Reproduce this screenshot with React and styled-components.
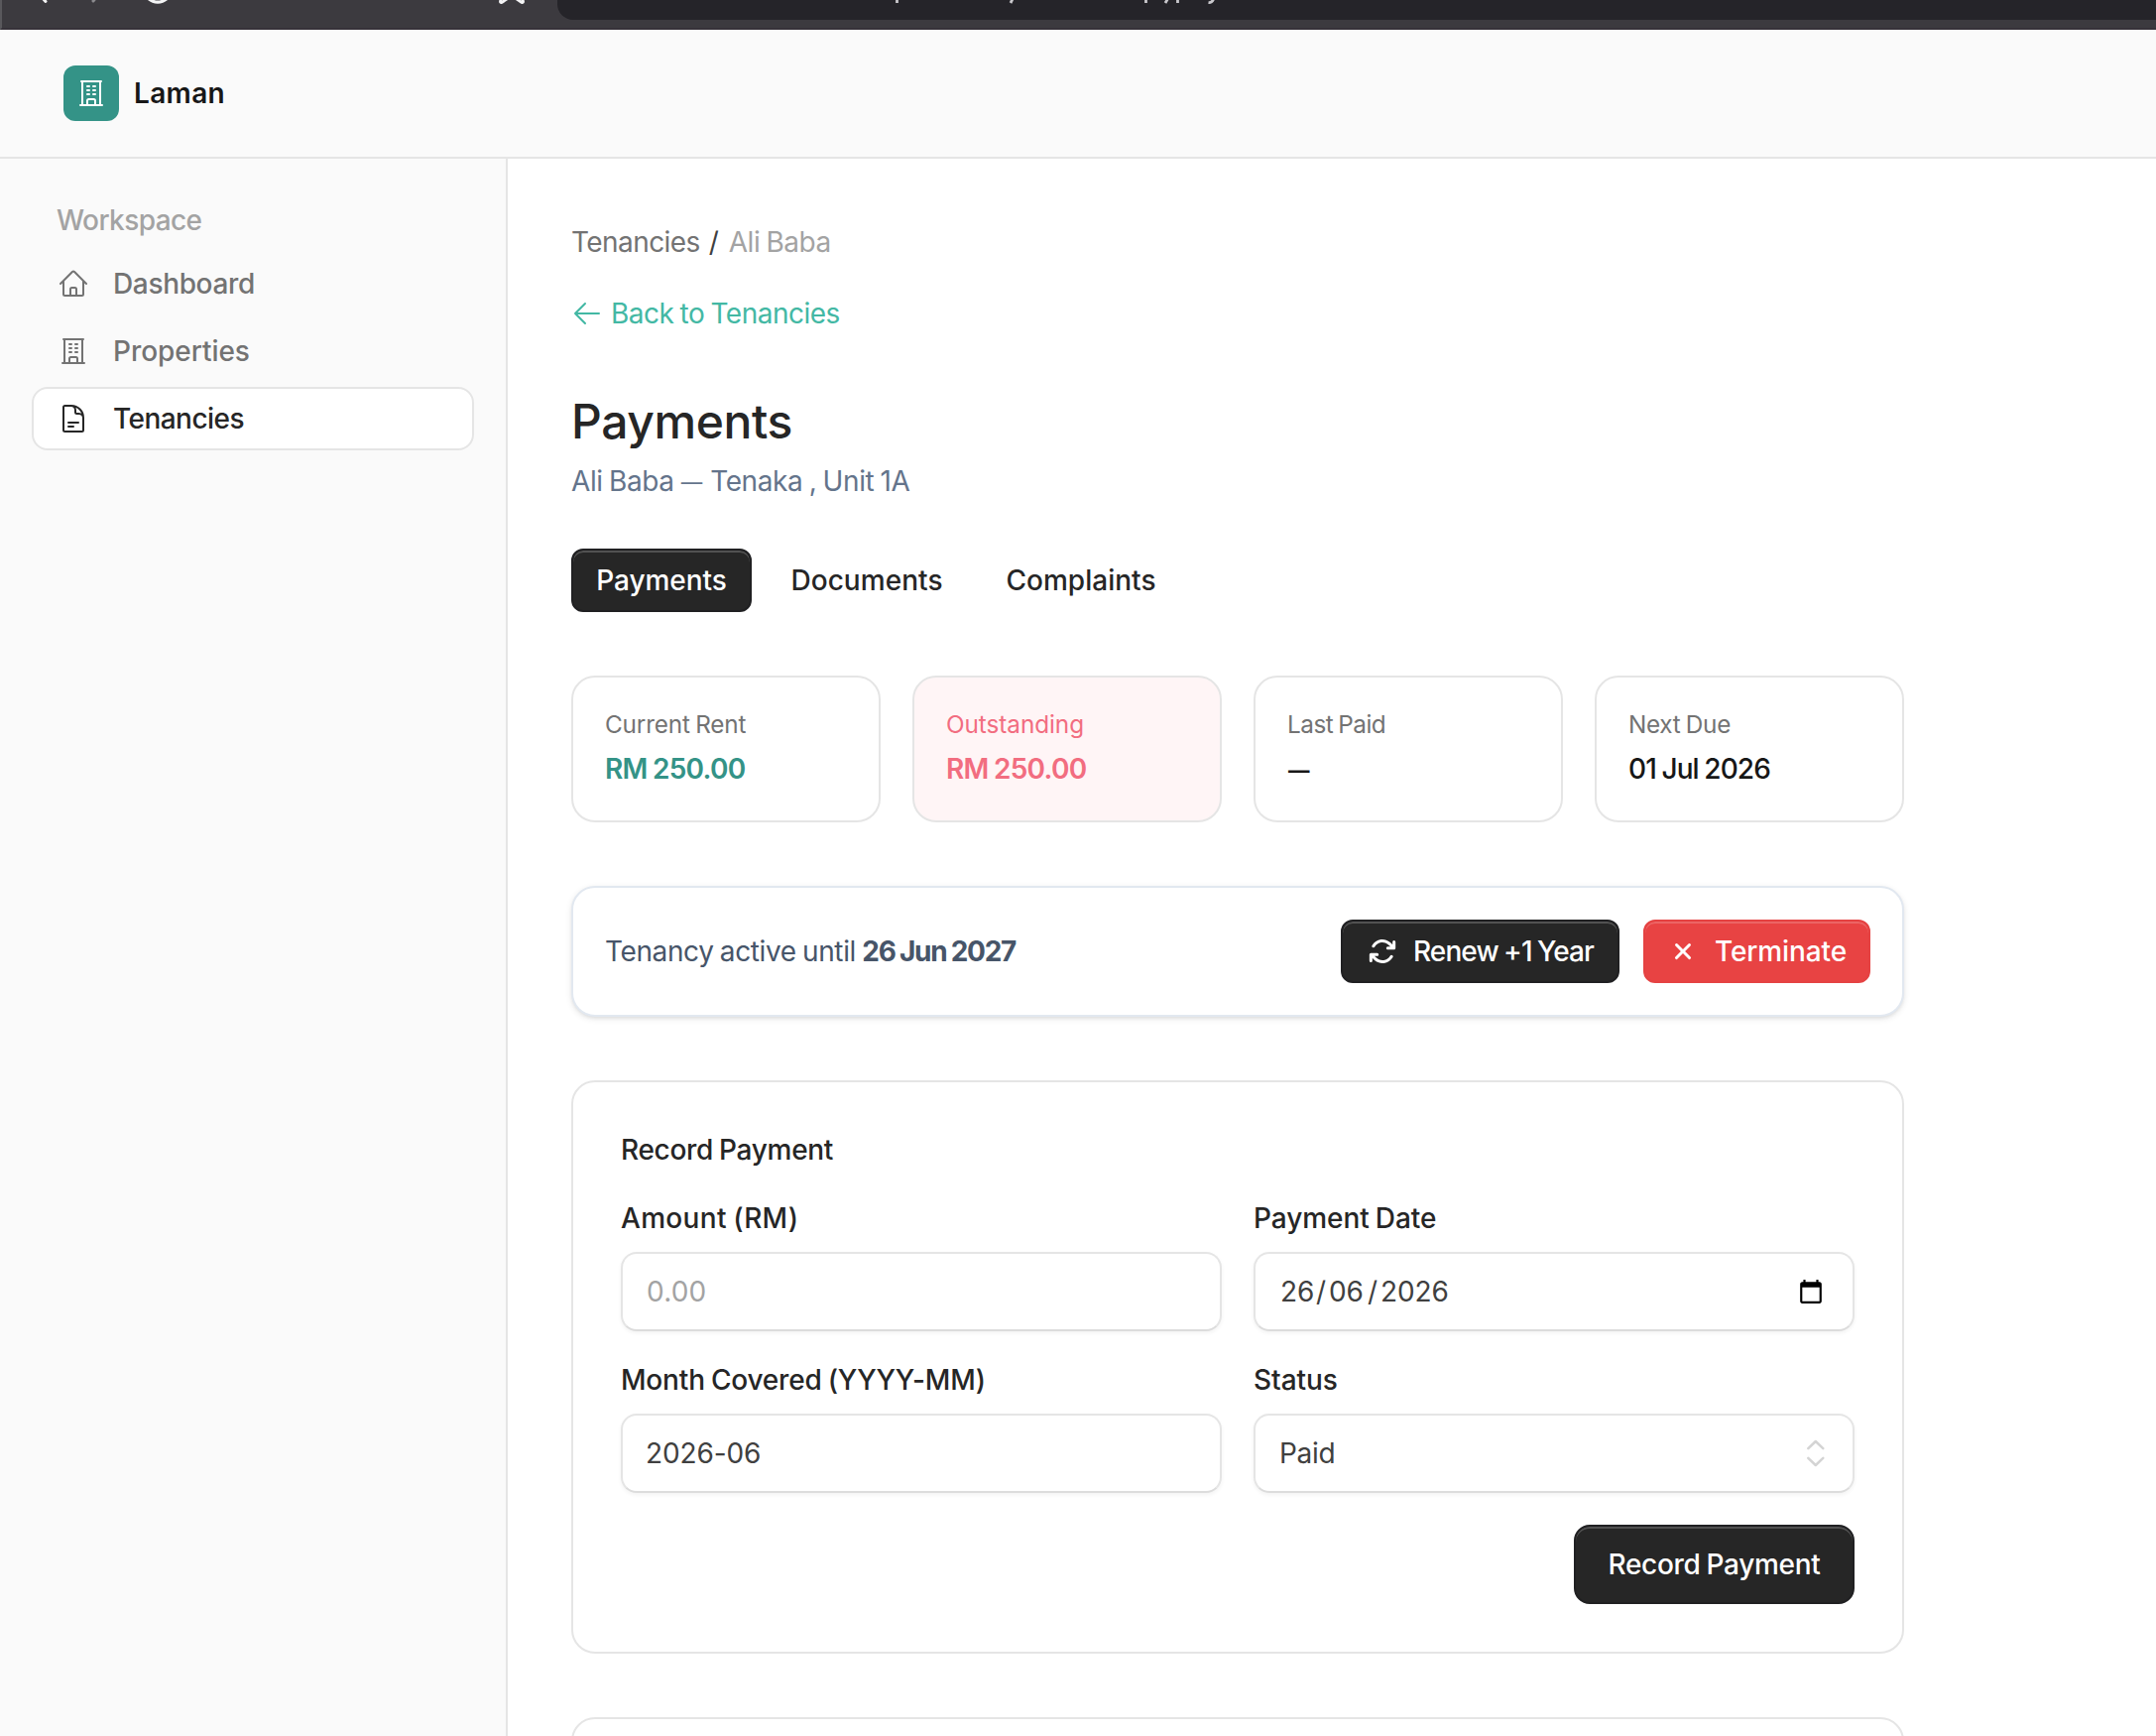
import React from "react";
import styled, { createGlobalStyle, css } from "styled-components";
import {
  HiOutlineHome,
  HiOutlineBuildingOffice,
  HiOutlineDocumentText,
  HiOutlineArrowLeft,
} from "react-icons/hi2";

const GlobalStyle = createGlobalStyle`
  *, *::before, *::after { box-sizing: border-box; }
  html, body { margin: 0; padding: 0; overflow: hidden; background: #fff; }
  body {
    font-family: Inter, "Liberation Sans", sans-serif;
    font-size: 28px;
    line-height: 40px;
    color: #262626;
    -webkit-font-smoothing: antialiased;
  }
`;

/* Per-string tracking: letter spacing and word spacing in px. */
const tracking = css`
  letter-spacing: ${(p) => p.$ls ?? -0.3}px;
  word-spacing: ${(p) => p.$ws ?? -1.2}px;
  white-space: nowrap;
`;

const Page = styled.div`
  display: flex;
  flex-direction: column;
  width: 2174px;
  height: 1750px;
  overflow: hidden;
`;

/* Browser toolbar */
const BrowserBar = styled.div`
  display: flex;
  flex: none;
  height: 30px;
  background: #3c3a3f;
  border-bottom: 2px solid #37323a;
  border-left: 2px solid #59585c;
`;
const BrowserButtons = styled.svg`
  display: block;
  flex: none;
  width: 560px;
  height: 28px;
`;
const AddressBar = styled.div`
  flex: 1;
  height: 20px;
  background: #252429;
  border-bottom-left-radius: 16px;
  overflow: hidden;
`;
const AddressMarks = styled.svg`
  display: block;
  width: 700px;
  height: 20px;
`;

/* Header */
const Header = styled.header`
  display: flex;
  flex: none;
  align-items: center;
  gap: 15px;
  height: 130px;
  padding: 0 64px 2px;
  background: #fafafa;
  box-shadow: inset 0 -2px #e5e5e5;
`;
const Logo = styled.div`
  display: grid;
  place-items: center;
  width: 56px;
  height: 56px;
  border-radius: 12px;
  background: #349387;
  color: #fff;
  font-size: 32px;
  svg { display: block; }
`;
const Brand = styled.span`
  ${tracking}
  font-weight: 600;
  color: #171717;
`;

const Body = styled.div`
  display: flex;
  flex: 1;
  min-height: 0;
`;

/* Sidebar */
const Sidebar = styled.aside`
  flex: none;
  width: 512px;
  padding: 42px 32px 0;
  background: #fafafa;
  border-right: 2px solid #e5e5e5;
`;
const NavHeading = styled.div`
  ${tracking}
  padding-left: 25px;
  margin-bottom: 12px;
  font-weight: 500;
  color: #a3a3a3;
`;
const NavList = styled.nav`
  display: flex;
  flex-direction: column;
  gap: 4px;
`;
const NavItem = styled.a`
  ${tracking}
  display: flex;
  align-items: center;
  gap: 24px;
  width: 446px;
  height: 64px;
  padding-left: 24px;
  border: 2px solid ${(p) => (p.$active ? "#e5e5e5" : "transparent")};
  border-radius: 16px;
  background: ${(p) => (p.$active ? "#fff" : "transparent")};
  color: ${(p) => (p.$active ? "#262626" : "#737373")};
  font-weight: 500;
  svg { width: 32px; height: 32px; flex: none; }
`;

/* Main column */
const Main = styled.main`
  flex: none;
  width: 1408px;
  padding: 64px 0 0 64px;
`;
const Breadcrumbs = styled.div`
  display: flex;
  height: 40px;
`;
const Crumb = styled.span`
  ${tracking}
  color: ${(p) => (p.$current ? "#a3a3a3" : "#737373")};
`;
const Slash = styled.span`
  width: 29px;
  padding-left: 9px;
  color: #404040;
`;
const BackLink = styled.a`
  ${tracking}
  display: flex;
  align-items: center;
  gap: 8px;
  height: 40px;
  margin-top: 32px;
  color: #43b8a4;
  svg { width: 32px; height: 32px; }
`;
const Title = styled.h1`
  ${tracking}
  margin: 61px 0 12px;
  font-size: 48px;
  line-height: 56px;
  font-weight: 500;
`;
const Subtitle = styled.p`
  ${tracking}
  height: 40px;
  margin: 0;
  color: #64748b;
`;
const Dash = styled.span`
  margin: 0 2px 0 1px;
  font-size: 21.5px;
  line-height: 0;
  vertical-align: 1px;
  ${(p) => p.$bold && "font-weight: 700;"}
`;

const Tabs = styled.div`
  display: flex;
  gap: 16px;
  margin-top: 48px;
`;
const darkFill = css`
  background: #262626;
  border-color: #202022;
  box-shadow: inset 0 2px rgba(255, 255, 255, 0.2);
  color: #fff;
`;
const redFill = css`
  background: #e84343;
  border-color: #e54242;
  box-shadow: inset 0 2px rgba(255, 255, 255, 0.18);
  color: #fff;
`;
const Button = styled.button`
  display: flex;
  align-items: center;
  justify-content: ${(p) => (p.$pad ? "flex-start" : "center")};
  gap: ${(p) => p.$gap ?? 15}px;
  width: ${(p) => p.$w}px;
  height: ${(p) => (p.$large ? 80 : 64)}px;
  padding: 0 ${(p) => p.$pad ?? 0}px;
  border: 2px solid transparent;
  border-radius: ${(p) => (p.$large ? 16 : 12)}px;
  background: transparent;
  color: #262626;
  font: inherit;
  font-weight: 500;
  ${tracking}
  ${(p) => p.$tone === "dark" && darkFill}
  ${(p) => p.$tone === "red" && redFill}
  svg { display: block; flex: none; width: 32px; height: 32px; }
`;

const Stats = styled.div`
  display: grid;
  grid-template-columns: repeat(4, 312px);
  gap: 32px;
  margin-top: 64px;
`;
const Stat = styled.div`
  height: 148px;
  padding: 32px;
  border: 2px solid #e5e5e5;
  border-radius: 24px;
  background: ${(p) => (p.$alert ? "#fff5f6" : "#fff")};
`;
const StatLabel = styled.div`
  ${tracking}
  font-size: 24.3px;
  line-height: 30px;
  color: ${(p) => p.$color || "#737373"};
`;
const StatValue = styled.div`
  ${tracking}
  margin-top: 10px;
  font-weight: ${(p) => p.$weight || 600};
  color: ${(p) => p.$color || "#171717"};
`;

const TenancyBar = styled.section`
  display: flex;
  align-items: center;
  justify-content: space-between;
  height: 132px;
  margin-top: 64px;
  padding: 0 32px;
  border: 2px solid #e2e8f0;
  border-radius: 24px;
  background: #fff;
  box-shadow: 0 2px 6px rgba(0, 0, 0, 0.1), 0 2px 4px -2px rgba(0, 0, 0, 0.1);
`;
const TenancyText = styled.p`
  ${tracking}
  margin: 0;
  color: #475569;
`;
const Strong = styled.strong`
  ${tracking}
  font-weight: 700;
`;
const Actions = styled.div`
  display: flex;
  gap: 24px;
`;

/* Payment form */
const FormCard = styled.section`
  height: 578px;
  margin-top: 64px;
  padding: 48px;
  border: 2px solid #e5e5e5;
  border-radius: 24px;
`;
const FormTitle = styled.h2`
  ${tracking}
  margin: 0 0 35px;
  font-size: 28px;
  line-height: 40px;
  font-weight: 500;
`;
const Fields = styled.div`
  display: grid;
  grid-template-columns: 606px 606px;
  gap: 35px 32px;
`;
const Field = styled.div`
  display: flex;
  flex-direction: column;
  gap: 20px;
`;
const Label = styled.label`
  ${tracking}
  line-height: 28px;
  font-weight: 500;
`;
const Control = styled.div`
  ${tracking}
  display: flex;
  align-items: center;
  justify-content: space-between;
  height: 80px;
  padding: 0 ${(p) => p.$pr ?? 24}px 0 ${(p) => p.$pl ?? 23}px;
  border: 2px solid #e5e5e5;
  border-bottom-color: #dcdcdc;
  border-radius: 16px;
  background: #fff;
  box-shadow: 0 2px 4px rgba(0, 0, 0, 0.05);
  color: ${(p) => (p.$placeholder ? "#a3a3a3" : "#404040")};
  svg { display: block; }
`;
const DateValue = styled.div`
  display: flex;
  padding-left: 2px;
`;
const DatePart = styled.span`
  width: ${(p) => p.$w}px;
`;
const FormFooter = styled.div`
  display: flex;
  justify-content: flex-end;
  margin-top: 32px;
`;
const NextCard = styled.section`
  height: 200px;
  margin-top: 64px;
  border: 2px solid #e5e5e5;
  border-radius: 24px;
`;

const RenewIcon = () => (
  <svg viewBox="0 0 16 16" fill="currentColor">
    <path fillRule="evenodd" clipRule="evenodd" d="M13.836 2.477a.75.75 0 0 1 .75.75v3.182a.75.75 0 0 1-.75.75h-3.182a.75.75 0 0 1 0-1.5h1.37l-.84-.841a4.5 4.5 0 0 0-7.08.932.75.75 0 0 1-1.3-.75 6 6 0 0 1 9.44-1.242l.842.84V3.227a.75.75 0 0 1 .75-.75Zm-.911 7.5A.75.75 0 0 1 13.199 11a6 6 0 0 1-9.44 1.241l-.84-.84v1.371a.75.75 0 0 1-1.5 0V9.591a.75.75 0 0 1 .75-.75H5.35a.75.75 0 0 1 0 1.5H3.98l.841.841a4.5 4.5 0 0 0 7.08-.932.75.75 0 0 1 1.025-.273Z" />
  </svg>
);
const CloseIcon = () => (
  <svg viewBox="0 0 16 16" fill="currentColor">
    <path d="M5.28 4.22a.75.75 0 0 0-1.06 1.06L6.94 8l-2.72 2.72a.75.75 0 1 0 1.06 1.06L8 9.06l2.72 2.72a.75.75 0 1 0 1.06-1.06L9.06 8l2.72-2.72a.75.75 0 0 0-1.06-1.06L8 6.94 5.28 4.22Z" />
  </svg>
);
const CalendarIcon = () => (
  <svg width="26" height="26" viewBox="0 0 24 24" fill="#000">
    <path d="M20 3h-1V1h-2v2H7V1H5v2H4c-1.1 0-2 .9-2 2v16c0 1.1.9 2 2 2h16c1.1 0 2-.9 2-2V5c0-1.1-.9-2-2-2zm0 18H4V8h16v13z" />
  </svg>
);
const SelectArrows = () => (
  <svg width="20" height="30" viewBox="0 0 20 30" fill="none" stroke="#d4d4d4" strokeWidth="2.5" strokeLinecap="round" strokeLinejoin="round">
    <path d="M2.3 10.2 9.8 3l7.5 7.2M2.3 19.8 9.8 27l7.5-7.2" />
  </svg>
);

const NAV = [
  { label: "Dashboard", Icon: HiOutlineHome, ls: -0.35 },
  { label: "Properties", Icon: HiOutlineBuildingOffice, ls: -0.05 },
  { label: "Tenancies", Icon: HiOutlineDocumentText, ls: -0.55, active: true },
];

export default function App() {
  return (
    <Page>
      <GlobalStyle />
      <BrowserBar>
        <BrowserButtons viewBox="2 0 560 28" fill="none" stroke="#f4f4f5" strokeWidth="3" strokeLinecap="round">
          <path d="M41 -4 46 1.5" />
          <path d="M98 -4 94 1" stroke="#8b8a8e" />
          <circle cx="159" cy="-11.7" r="13.8" strokeWidth="3.2" />
          <path d="M506 -4 504.5 1.4Q504.3 3 506 2.4L514 -3M526 -4 527.5 1.4Q527.7 3 526 2.4L518 -3" strokeWidth="2.8" />
        </BrowserButtons>
        <AddressBar>
          <AddressMarks viewBox="562 0 700 20" fill="none" stroke="#c9c8cc" strokeWidth="2.8">
            <path d="M904.5 -2V3M1155.5 -2V3M1187.5 -2V3" />
            <path d="M1021.5 -2 1019 3M1178 -2 1175 3M1224 -2Q1222.5 3 1218.5 2.6" />
          </AddressMarks>
        </AddressBar>
      </BrowserBar>
      <Header>
        <Logo><HiOutlineBuildingOffice /></Logo>
        <Brand $ls={0.35}>Laman</Brand>
      </Header>
      <Body>
        <Sidebar>
          <NavHeading $ls={-0.59}>Workspace</NavHeading>
          <NavList>
            {NAV.map(({ label, Icon, ls, active }) => (
              <NavItem key={label} $active={active} $ls={ls}>
                <Icon />
                {label}
              </NavItem>
            ))}
          </NavList>
        </Sidebar>
        <Main>
          <Breadcrumbs>
            <Crumb $ls={-0.57}>Tenancies</Crumb>
            <Slash>/</Slash>
            <Crumb $current $ls={-0.48}>Ali Baba</Crumb>
          </Breadcrumbs>
          <BackLink $ls={-0.5}>
            <HiOutlineArrowLeft />
            Back to Tenancies
          </BackLink>
          <Title $ls={-0.4}>Payments</Title>
          <Subtitle $ls={-0.4} $ws={-1.2}>
            Ali Baba <Dash>—</Dash> Tenaka , Unit 1A
          </Subtitle>
          <Tabs>
            <Button $tone="dark" $w={182} $ls={-0.08}>Payments</Button>
            <Button $w={200} $ls={0.05}>Documents</Button>
            <Button $w={200} $ls={0.02}>Complaints</Button>
          </Tabs>
          <Stats>
            <Stat>
              <StatLabel $ls={-0.17}>Current Rent</StatLabel>
              <StatValue $color="#349387" $ls={-0.76} $ws={-0.8}>RM 250.00</StatValue>
            </Stat>
            <Stat $alert>
              <StatLabel $color="#f26d80" $ls={-0.05}>Outstanding</StatLabel>
              <StatValue $color="#f26d80" $ls={-0.76} $ws={-0.8}>RM 250.00</StatValue>
            </Stat>
            <Stat>
              <StatLabel $ls={-0.5}>Last Paid</StatLabel>
              <StatValue><Dash $bold>—</Dash></StatValue>
            </Stat>
            <Stat>
              <StatLabel $ls={-0.28}>Next Due</StatLabel>
              <StatValue $weight={500} $ls={-0.9} $ws={-1}>01 Jul 2026</StatValue>
            </Stat>
          </Stats>
          <TenancyBar>
            <TenancyText $ls={-0.38}>
              Tenancy active until <Strong $ls={-1.26} $ws={-1}>26 Jun 2027</Strong>
            </TenancyText>
            <Actions>
              <Button $tone="dark" $pad={24} $w={281} $ls={-0.9} $ws={-1.2}>
                <RenewIcon />
                Renew +1 Year
              </Button>
              <Button $tone="red" $pad={22} $gap={16} $w={229} $ls={-0.12}>
                <CloseIcon />
                Terminate
              </Button>
            </Actions>
          </TenancyBar>
          <FormCard>
            <FormTitle>Record Payment</FormTitle>
            <Fields>
              <Field>
                <Label $ls={0.32}>Amount (RM)</Label>
                <Control $placeholder $pl={24} $ls={0.2}>0.00</Control>
              </Field>
              <Field>
                <Label $ls={-0.07}>Payment Date</Label>
                <Control $pr={29} $ls={-0.1}>
                  <DateValue>
                    <DatePart $w={36}>26</DatePart>
                    <DatePart $w={13}>/</DatePart>
                    <DatePart $w={39}>06</DatePart>
                    <DatePart $w={13}>/</DatePart>
                    <DatePart $w={70}>2026</DatePart>
                  </DateValue>
                  <CalendarIcon />
                </Control>
              </Field>
              <Field>
                <Label $ls={-0.18}>Month Covered (YYYY-MM)</Label>
                <Control $ls={-0.1}>2026-06</Control>
              </Field>
              <Field>
                <Label $ls={-0.05}>Status</Label>
                <Control $pl={24} $pr={27} $ls={-0.3}>
                  Paid
                  <SelectArrows />
                </Control>
              </Field>
            </Fields>
            <FormFooter>
              <Button $tone="dark" $large $w={283}>Record Payment</Button>
            </FormFooter>
          </FormCard>
          <NextCard />
        </Main>
      </Body>
    </Page>
  );
}
